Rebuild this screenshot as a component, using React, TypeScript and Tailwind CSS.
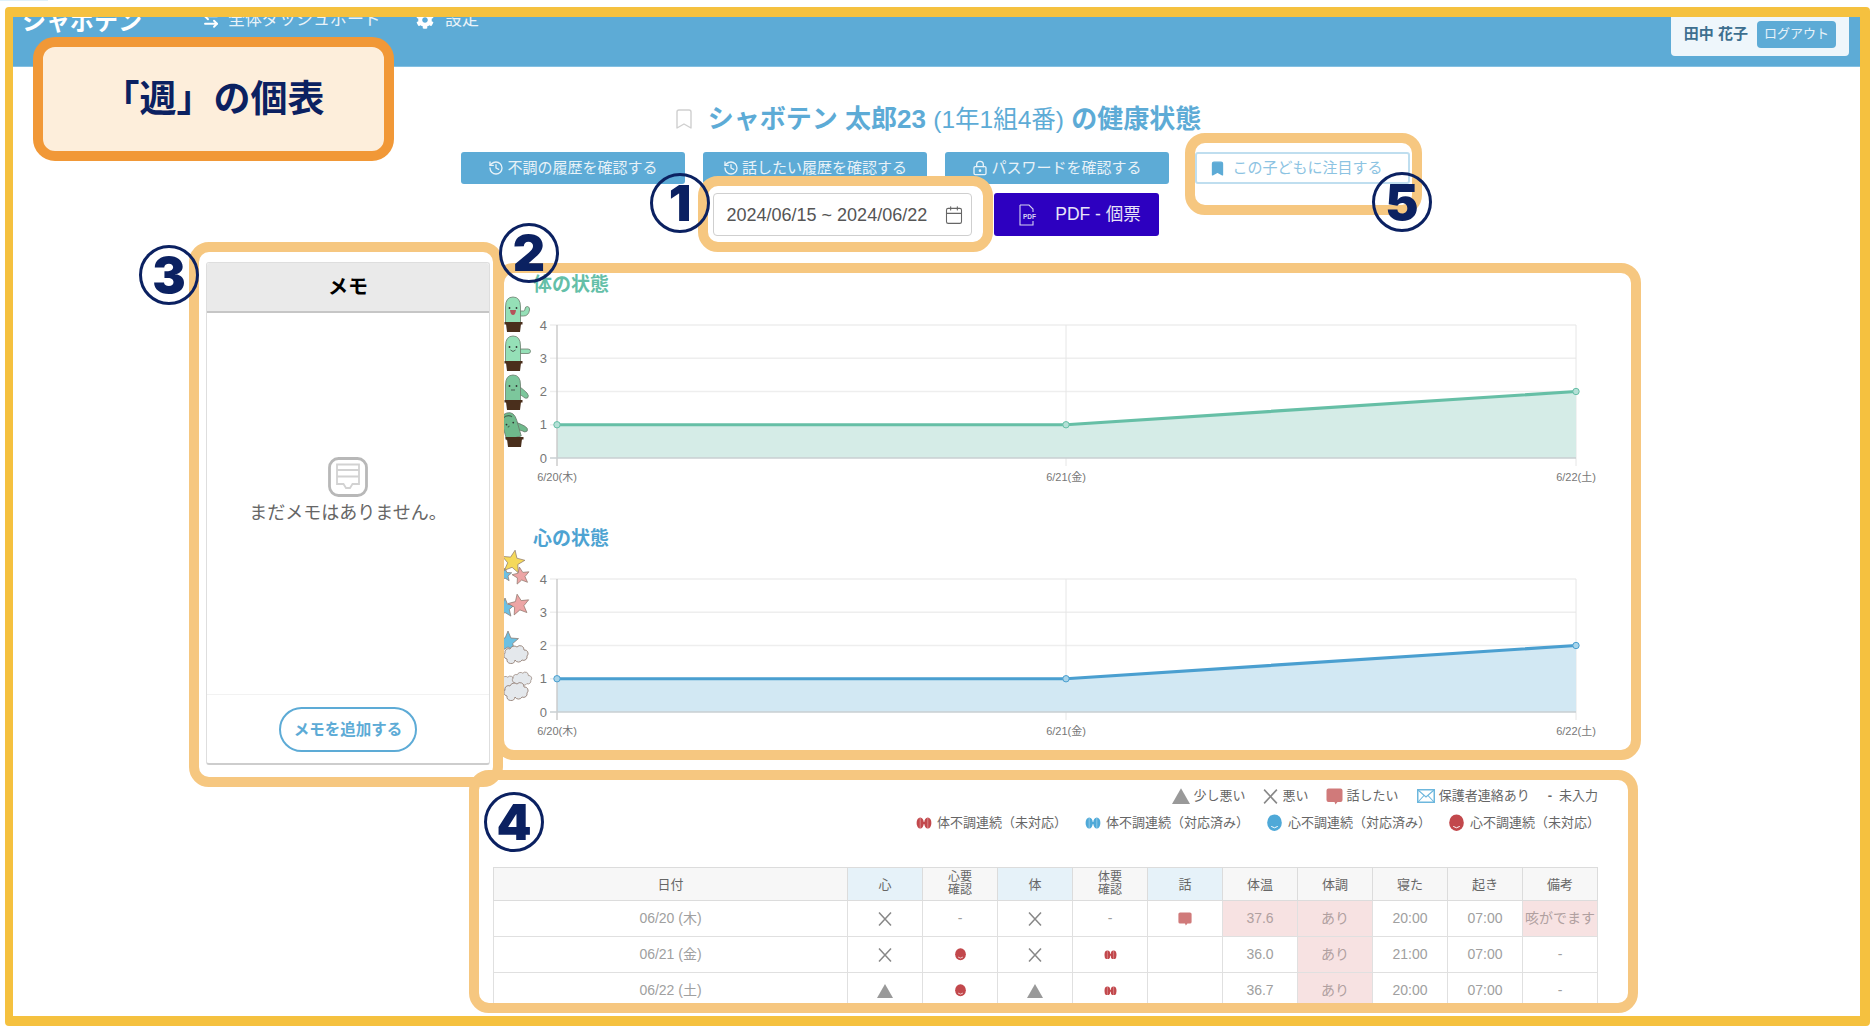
import React from "react";
import { Bookmark, History, LockKeyhole, Calendar, ArrowLeftRight } from "lucide-react";
import { FaCog } from "react-icons/fa";

const Tri = ({ s = 16, c = "#999" }: { s?: number; c?: string }) => (
  <svg width={s} height={s} viewBox="0 0 16 16" className="shrink-0"><polygon points="8,1 16,15 0,15" fill={c} /></svg>
);
const Cross = ({ s = 16, c = "#888" }: { s?: number; c?: string }) => (
  <svg width={s} height={s} viewBox="0 0 16 16" className="shrink-0"><path d="M2 1.5 L14 14.5 M14 1.5 L2 14.5" stroke={c} strokeWidth="1.5" fill="none" /></svg>
);
const Bubble = ({ s = 17 }: { s?: number }) => (
  <svg width={s} height={s} viewBox="0 0 17 17" className="shrink-0"><path d="M2.5 0.5 H14.5 Q16.5 0.5 16.5 2.5 V12 Q16.5 14 14.5 14 H11.5 L9.5 16.5 L8.5 14 H2.5 Q0.5 14 0.5 12 V2.5 Q0.5 0.5 2.5 0.5 Z" fill="#d07a7a" /></svg>
);
const Mail = () => (
  <svg width="18" height="16" viewBox="0 0 18 16" className="shrink-0"><rect x="0.75" y="1.75" width="16.5" height="12.5" fill="none" stroke="#6db7dd" strokeWidth="1.5" /><path d="M1 2 L9 9 L17 2 M1 14 L7 7.5 M17 14 L11 7.5" fill="none" stroke="#6db7dd" strokeWidth="1.1" /></svg>
);
const Dumb = ({ c, w = 16 }: { c: string; w?: number }) => (
  <svg width={w} height={w * 0.75} viewBox="0 0 16 12" className="shrink-0">
    <ellipse cx="4.2" cy="6" rx="3.6" ry="5.5" fill={c} />
    <ellipse cx="11.8" cy="6" rx="3.6" ry="5.5" fill={c} />
    <rect x="6" y="5" width="4" height="2" fill={c} />
    <path d="M4.2 1 V11 M11.8 1 V11" stroke="#fff" strokeWidth="0.6" opacity="0.6" />
  </svg>
);
const Face = ({ c, s = 15 }: { c: string; s?: number }) => (
  <svg width={s} height={s * 1.15} viewBox="0 0 16 18" className="shrink-0">
    <ellipse cx="8" cy="9" rx="7.8" ry="8.8" fill={c} />
    <path d="M4.5 13 Q8 16 11.5 13" stroke="#fff" strokeWidth="1" fill="none" />
  </svg>
);

function Cactus({ x, y, body, arm = "up", tilt = 0, mood = 0 }: { x: number; y: number; body: string; arm?: string; tilt?: number; mood?: number }) {
  const ol = "#6b7d6d";
  return (
    <g transform={`translate(${x} ${y})`}>
      <g transform={`rotate(${tilt} 9 26)`}>
        {arm === "up" ? (
          <path d="M16 14 H19.5 Q21 14 21 12 Q21 9.5 23.5 9.5 Q26 10 25.5 13 Q24.5 19 19.5 19 H16 Z" fill={body} stroke={ol} strokeWidth="0.8" />
        ) : arm === "flat" ? (
          <path d="M16 13 H24 Q26.5 13 26.5 15.3 Q26.5 17.5 24 17.5 H16 Z" fill={body} stroke={ol} strokeWidth="0.8" />
        ) : (
          <path d="M16 12 Q20 15 23 18 Q25.5 21 23.5 23 Q21 24 19 21.5 Q17 20 16 20 Z" fill={body} stroke={ol} strokeWidth="0.8" />
        )}
        <path d="M1.5 26 V10 Q1.5 0 9 0 Q16.5 0 16.5 10 V26 Z" fill={body} stroke={ol} strokeWidth="0.8" />
        <circle cx="5.5" cy="11" r="0.9" fill="#333" />
        <circle cx="12.5" cy="11" r="0.9" fill="#333" />
        {mood === 0 && <path d="M6 13 H12 Q11.5 18 9 18 Q6.5 18 6 13 Z" fill="#b5525a" />}
        {mood === 1 && <path d="M6.5 14 Q9 17 11.5 14" fill="none" stroke="#333" strokeWidth="0.7" />}
        {mood === 2 && <path d="M7 15 H11" fill="none" stroke="#333" strokeWidth="0.7" />}
        {mood === 3 && <path d="M4 4 Q9 1 13 5 M6 14 L8 13" fill="none" stroke="#44664f" strokeWidth="1" />}
      </g>
      <rect x="0.5" y="25" width="18" height="2.5" fill="#4a2f1c" />
      <path d="M2 27 H17 L16 35 H3 Z" fill="#4a2f1c" />
    </g>
  );
}

function Star({ cx, cy, r, fill, rot = 0 }: { cx: number; cy: number; r: number; fill: string; rot?: number }) {
  const pts: string[] = [];
  for (let i = 0; i < 10; i++) {
    const rr = i % 2 === 0 ? r : r * 0.45;
    const a = ((-90 + rot + i * 36) * Math.PI) / 180;
    pts.push(`${(cx + rr * Math.cos(a)).toFixed(1)},${(cy + rr * Math.sin(a)).toFixed(1)}`);
  }
  return <polygon points={pts.join(" ")} fill={fill} stroke="#8a7468" strokeWidth="0.7" strokeLinejoin="round" />;
}
function Cloud({ cx, cy, s = 1 }: { cx: number; cy: number; s?: number }) {
  return (
    <path
      transform={`translate(${cx} ${cy}) scale(${s})`}
      d="M-9 6 A3.5 3.5 0 0 1 -11 0 A3.5 3.5 0 0 1 -6 -4 A4.5 4.5 0 0 1 1 -6 A4 4 0 0 1 8 -3 A3.5 3.5 0 0 1 11 3 A3.5 3.5 0 0 1 6 7 A4 4 0 0 1 -1 7 A4 4 0 0 1 -9 6 Z"
      fill="#e4e8ec"
      stroke="#8a7468"
      strokeWidth="0.8"
    />
  );
}

const X0 = 64, XM = 573, XR = 1083, Y4 = 27, Y0 = 160, STEP = 33.25;
const yOf = (v: number) => Y0 - v * STEP;

function Chart({ title, titleColor, line, fill, point, icons }: { title: string; titleColor: string; line: string; fill: string; point: string; icons: React.ReactNode }) {
  const xs = [X0, XM, XR];
  const vs = [1, 1, 2];
  const labels = ["6/20(木)", "6/21(金)", "6/22(土)"];
  return (
    <div>
      <div className="h-[26px] pl-[40px] text-[19px] leading-[26px] font-bold" style={{ color: titleColor }}>{title}</div>
      <svg width="1105" height="192" viewBox="0 0 1105 192" className="block overflow-visible" style={{ fontFamily: '"Liberation Sans","Noto Sans CJK JP",sans-serif' }}>
        {[1, 2, 3, 4].map((v) => (
          <line key={v} x1={X0 - 7} x2={XR} y1={yOf(v)} y2={yOf(v)} stroke="#eeeeee" strokeWidth="1.3" />
        ))}
        <line x1={XM} x2={XM} y1={Y4} y2={Y0 + 8} stroke="#e6e6e6" />
        <line x1={XR} x2={XR} y1={Y4} y2={Y0 + 8} stroke="#e6e6e6" />
        <polygon points={`${X0},${yOf(1)} ${XM},${yOf(1)} ${XR},${yOf(2)} ${XR},${Y0} ${X0},${Y0}`} fill={fill} />
        <line x1={X0} x2={X0} y1={Y4} y2={Y0 + 8} stroke="#c9c9c9" strokeWidth="1.4" />
        <line x1={X0 - 7} x2={XR} y1={Y0} y2={Y0} stroke="#c9cfd2" strokeWidth="1.4" />
        <polyline points={xs.map((x, i) => `${x},${yOf(vs[i])}`).join(" ")} fill="none" stroke={line} strokeWidth="3.2" />
        {xs.map((x, i) => (
          <circle key={x} cx={x} cy={yOf(vs[i])} r="3.2" fill={point} stroke={line} strokeWidth="1" />
        ))}
        {[0, 1, 2, 3, 4].map((v) => (
          <text key={v} x={X0 - 10} y={yOf(v) + 4.5} textAnchor="end" fontSize="13" fill="#777">{v}</text>
        ))}
        {labels.map((l, i) => (
          <text key={l} x={xs[i]} y={Y0 + 23} textAnchor="middle" fontSize="11" fill="#777">{l}</text>
        ))}
        {icons}
      </svg>
    </div>
  );
}

const cactusIcons = (
  <>
    <Cactus x={11} y={-1} body="#95e0b7" arm="up" mood={0} />
    <Cactus x={11} y={38} body="#95e0b7" arm="flat" mood={1} />
    <Cactus x={11} y={77} body="#7cc79c" arm="down" mood={2} />
    <Cactus x={12} y={114} body="#6fba8c" arm="down" tilt={-16} mood={3} />
  </>
);
const starIcons = (
  <>
    <Star cx={12} cy={23} r={7} fill="#6cc0e2" />
    <Star cx={20} cy={10} r={12} fill="#f5d95b" rot={10} />
    <Star cx={28} cy={24} r={9} fill="#eda5a5" rot={-10} />
    <Star cx={12} cy={56} r={10} fill="#6cc0e2" />
    <Star cx={26} cy={53} r={11} fill="#eda5a5" rot={-10} />
    <Star cx={15} cy={90} r={11} fill="#6cc0e2" />
    <Cloud cx={23} cy={101} />
    <Cloud cx={14} cy={130} s={0.8} />
    <Cloud cx={29} cy={126} s={0.8} />
    <Cloud cx={23} cy={138} />
  </>
);

const Annot = ({ className }: { className: string }) => (
  <div className={`absolute border-[10px] border-[#f6c780] rounded-[20px] ${className}`} />
);
const Num = ({ n, className }: { n: string; className: string }) => (
  <div className={`absolute w-[60px] h-[60px] rounded-full border-[3px] border-[#0b2161] flex items-center justify-center text-[#0b2161] text-[50px] leading-none font-black [font-family:Inter,sans-serif] ${className}`}>{n}</div>
);

const th = "border border-[#dcdcdc] bg-[#f7f7f7] text-[13px] leading-[13px] font-normal text-[#666] text-center p-0";
const th2 = "border border-[#dcdcdc] bg-[#f7f7f7] text-[12px] leading-[13px] font-normal text-[#666] text-center p-0";
const thb = "border border-[#dcdcdc] bg-[#e6f2f9] text-[13px] leading-[13px] font-normal text-[#666] text-center p-0";
const td = "border border-[#e0e0e0] text-[14px] text-[#a0a0a0] text-center p-0 h-[36px]";
const tdp = "border border-[#e0e0e0] bg-[#f7e2e2] text-[14px] text-[#b0a0a0] text-center p-0 h-[36px]";
const C = ({ children }: { children: React.ReactNode }) => <div className="flex items-center justify-center">{children}</div>;

const rows = [
  { d: "06/20 (木)", h: <Cross />, hn: "-", b: <Cross />, bn: "-", talk: true, t: "37.6", tp: true, s: "20:00", w: "07:00", n: "咳がでます", np: true },
  { d: "06/21 (金)", h: <Cross />, hn: <Face c="#c2484c" s={11} />, b: <Cross />, bn: <Dumb c="#c2484c" w={13} />, talk: false, t: "36.0", tp: false, s: "21:00", w: "07:00", n: "-", np: false },
  { d: "06/22 (土)", h: <Tri />, hn: <Face c="#c2484c" s={11} />, b: <Tri />, bn: <Dumb c="#c2484c" w={13} />, talk: false, t: "36.7", tp: false, s: "20:00", w: "07:00", n: "-", np: false },
];

export default function App() {
  return (
    <div className="relative w-[1876px] h-[1033px] bg-white overflow-hidden text-[#666]" style={{ fontFamily: '"Liberation Sans","Noto Sans CJK JP",sans-serif' }}>
      <div className="absolute left-0 top-0 w-[48px] h-[1px] bg-[#dff1fb]" />
      <div className="ml-[5px] mt-[7px] w-[1865px] h-[1019px] border-[10px] border-l-[8px] border-[#f5c13f] rounded-[4px] overflow-hidden flex flex-col">
        <header className="h-[50px] shrink-0 bg-[#5dabd6] border-b border-[#84c0e2] flex items-start text-white">
          <div className="ml-[9px] mt-[-7px] text-[24px] leading-[24px] font-bold whitespace-nowrap">シャボテン</div>
          <div className="ml-[60px] mt-[-6px] flex items-center text-[17px] leading-[18px] text-[#e9f3f9]">
            <ArrowLeftRight size={18} strokeWidth={2.5} className="text-white" />
            <span className="ml-[8px]">全体ダッシュボード</span>
            <FaCog size={18} className="ml-[35px] text-white" />
            <span className="ml-[11px]">設定</span>
          </div>
          <div className="ml-auto mr-[11px] h-[39px] pl-[13px] pr-[13px] pb-[5px] bg-[#eef6fb] rounded-b-[4px] flex items-center gap-[9px]">
            <span className="text-[15px] font-bold text-[#3d6f8f] whitespace-nowrap">田中 花子</span>
            <span className="w-[79px] h-[27px] bg-[#5dabd6] rounded-[4px] text-[13px] text-[#e6f2f9] flex items-center justify-center">ログアウト</span>
          </div>
        </header>

        <main className="flex-1 min-h-0">
          <div className="pt-[35px] h-[69px] flex items-center justify-center">
            <Bookmark size={24} strokeWidth={1.4} className="text-[#cfcfcf] mr-[12px]" />
            <h1 className="text-[26px] leading-[34px] font-bold text-[#5dabd6] whitespace-nowrap">
              シャボテン 太郎23 <span className="font-normal text-[24.5px]">(1年1組4番)</span> の健康状態
            </h1>
          </div>

          <div className="mt-[16px] pr-[2px] flex justify-center text-[15px] text-[#e8f2f8]">
            <div className="w-[224px] h-[32px] bg-[#5dabd6] rounded-[3px] flex items-center justify-center gap-[3px]"><History size={16} />不調の履歴を確認する</div>
            <div className="ml-[18px] w-[224px] h-[32px] bg-[#5dabd6] rounded-[3px] flex items-center justify-center gap-[3px]"><History size={16} />話したい履歴を確認する</div>
            <div className="ml-[18px] w-[224px] h-[32px] bg-[#5dabd6] rounded-[3px] flex items-center justify-center gap-[3px]"><LockKeyhole size={16} />パスワードを確認する</div>
            <div className="ml-[26px] w-[215px] h-[32px] pr-[13px] bg-white border-2 border-[#bfdeef] rounded-[3px] text-[#8cc3e2] flex items-center justify-center gap-[6px]"><Bookmark size={17} fill="#5dabd6" stroke="#5dabd6" />この子どもに注目する</div>
          </div>

          <div className="mt-[9px] pr-[2px] flex justify-center">
            <div className="w-[259px] h-[43px] border border-[#cfcfcf] rounded-[4px] flex items-center pl-[13px] pr-[7px] pt-[1px] text-[18px] text-[#555] whitespace-nowrap">
              <span>2024/06/15 ~ 2024/06/22</span>
              <Calendar size={20} strokeWidth={1.3} className="ml-auto text-[#666]" />
            </div>
            <div className="ml-[22px] w-[165px] h-[43px] pl-[8px] bg-[#2d00c0] rounded-[3px] flex items-center justify-center gap-[18px] text-[17.5px] text-[#e8e4f8]">
              <svg width="18" height="22" viewBox="0 0 18 22" fill="none">
                <path d="M1 1 H10 L14 5 V8 M14 17 V21 H1 V1" stroke="#d8d4f0" strokeWidth="1.1" />
                <text x="4" y="15" fontSize="6.5" fontWeight="700" fill="#d8d4f0">PDF</text>
              </svg>
              <span>PDF - 個票</span>
            </div>
          </div>

          <div className="mt-[26px] flex items-start">
            <aside className="ml-[193px] w-[284px] h-[503px] shrink-0 bg-white border border-[#dedede] border-b-2 border-b-[#cdcdcd] rounded-[3px] flex flex-col">
              <div className="h-[50px] shrink-0 bg-[#eaeaea] border-b-2 border-[#c6c6c6] rounded-t-[3px] flex items-center justify-center text-[20px] font-bold text-black">メモ</div>
              <div className="flex-1 flex flex-col items-center justify-center pb-[26px]">
                <svg width="40" height="40" viewBox="0 0 40 40" fill="none">
                  <rect x="1.5" y="1.5" width="37" height="37" rx="9" stroke="#b8b8b8" strokeWidth="2.8" />
                  <path d="M9 7.5 H31 V27 H24.5 L22 31 H18 L15.5 27 H9 Z" stroke="#d2d2d2" strokeWidth="1.8" />
                  <path d="M9 13 H31 M9 19.5 H31" stroke="#d2d2d2" strokeWidth="1.8" />
                </svg>
                <p className="mt-[4px] text-[18px] leading-[24px] text-[#666] whitespace-nowrap">まだメモはありません。</p>
              </div>
              <div className="h-[69px] shrink-0 border-t border-[#f2f2f2] flex justify-center pt-[12px]">
                <div className="w-[138px] h-[45px] rounded-full border-2 border-[#5dabd6] flex items-center justify-center text-[15.5px] font-bold text-[#5dabd6]">メモを追加する</div>
              </div>
            </aside>

            <section className="ml-[3px] w-[1105px] shrink-0 pt-[10px]">
              <Chart title="体の状態" titleColor="#64bfa8" line="#66bfa6" fill="#d5ece7" point="#b4e0d6" icons={cactusIcons} />
              <div className="mt-[36px]">
                <Chart title="心の状態" titleColor="#4da3d2" line="#4a9fd0" fill="#d2e8f3" point="#a7d4ea" icons={starIcons} />
              </div>

              <div className="mt-[42px] h-[20px] flex items-center justify-end text-[13px] leading-[20px] text-[#666]">
                <Tri s={18} /><span className="ml-[4px]">少し悪い</span>
                <span className="ml-[16px]"><Cross s={17} /></span><span className="ml-[4px]">悪い</span>
                <span className="ml-[17px]"><Bubble /></span><span className="ml-[4px]">話したい</span>
                <span className="ml-[18px]"><Mail /></span><span className="ml-[4px]">保護者連絡あり</span>
                <span className="ml-[18px] font-bold">-</span><span className="ml-[7px]">未入力</span>
              </div>
              <div className="mt-[7px] mr-[-2px] h-[20px] flex items-center justify-end text-[13px] leading-[20px] text-[#666]">
                <Dumb c="#c2484c" /><span className="ml-[5px]">体不調連続（未対応）</span>
                <span className="ml-[18px]"><Dumb c="#4fa9d8" /></span><span className="ml-[5px]">体不調連続（対応済み）</span>
                <span className="ml-[18px]"><Face c="#4fa9d8" /></span><span className="ml-[6px]">心不調連続（対応済み）</span>
                <span className="ml-[18px]"><Face c="#c2484c" /></span><span className="ml-[6px]">心不調連続（未対応）</span>
              </div>

              <table className="mt-[34px] w-[1104px] table-fixed border-collapse border border-[#cfcfcf]">
                <colgroup>
                  <col className="w-[354px]" /><col className="w-[75px]" /><col className="w-[75px]" /><col className="w-[75px]" /><col className="w-[75px]" /><col className="w-[75px]" /><col className="w-[75px]" /><col className="w-[75px]" /><col className="w-[75px]" /><col className="w-[75px]" /><col className="w-[75px]" />
                </colgroup>
                <thead>
                  <tr className="h-[33px]">
                    <th className={th}>日付</th>
                    <th className={thb}>心</th>
                    <th className={th2}>心要<br />確認</th>
                    <th className={thb}>体</th>
                    <th className={th2}>体要<br />確認</th>
                    <th className={thb}>話</th>
                    <th className={th}>体温</th>
                    <th className={th}>体調</th>
                    <th className={th}>寝た</th>
                    <th className={th}>起き</th>
                    <th className={th}>備考</th>
                  </tr>
                </thead>
                <tbody>
                  {rows.map((r) => (
                    <tr key={r.d}>
                      <td className={td}>{r.d}</td>
                      <td className={td}><C>{r.h}</C></td>
                      <td className={td}><C>{r.hn}</C></td>
                      <td className={td}><C>{r.b}</C></td>
                      <td className={td}><C>{r.bn}</C></td>
                      <td className={td}><C>{r.talk ? <Bubble s={14} /> : null}</C></td>
                      <td className={r.tp ? tdp : td}>{r.t}</td>
                      <td className={tdp}>あり</td>
                      <td className={td}>{r.s}</td>
                      <td className={td}>{r.w}</td>
                      <td className={r.np ? tdp : td}>{r.n}</td>
                    </tr>
                  ))}
                </tbody>
              </table>
            </section>
          </div>
        </main>
      </div>

      {/* annotation overlays */}
      <Annot className="left-[698px] top-[176px] w-[295px] h-[76px]" />
      <Annot className="left-[1185px] top-[133px] w-[237px] h-[82px]" />
      <Annot className="left-[189px] top-[242px] w-[314px] h-[545px]" />
      <Annot className="left-[494px] top-[263px] w-[1147px] h-[497px]" />
      <Annot className="left-[469px] top-[770px] w-[1169px] h-[243px]" />
      <Num n="1" className="left-[650px] top-[173px]" />
      <Num n="2" className="left-[499px] top-[223px]" />
      <Num n="3" className="left-[139px] top-[245px]" />
      <Num n="4" className="left-[484px] top-[792px]" />
      <Num n="5" className="left-[1372px] top-[172px]" />
      <div className="absolute left-[33px] top-[37px] w-[361px] h-[124px] bg-[#fdeedb] border-[10px] border-[#f19837] rounded-[22px] pt-[2px] flex items-center justify-center text-[37px] font-bold text-[#0b2161]">「週」の個表</div>
    </div>
  );
}
